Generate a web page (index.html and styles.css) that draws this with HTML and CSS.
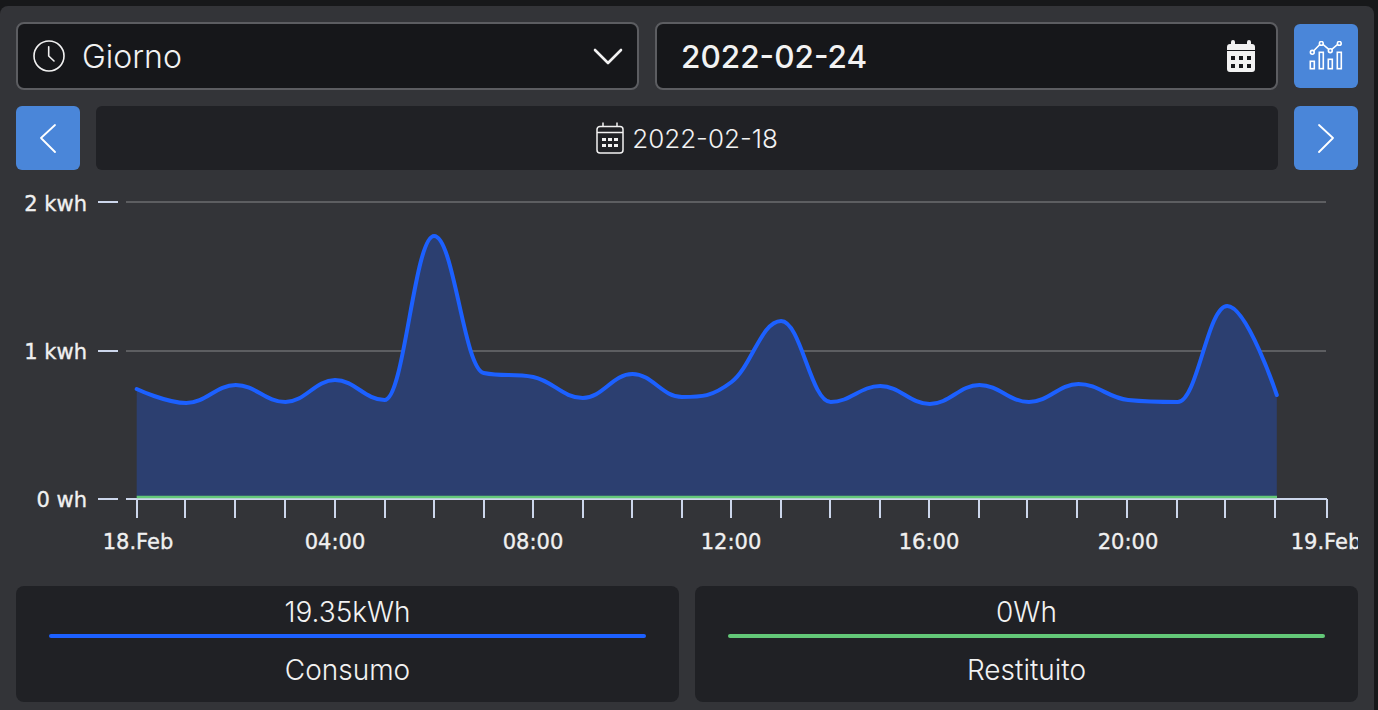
FILE: index.html
```html
<!DOCTYPE html>
<html lang="it">
<head>
    <meta charset="UTF-8">
    <meta name="viewport" content="width=device-width, initial-scale=1.0">
    <title>Consumi</title>
    <link rel="stylesheet" href="styles.css">
</head>
<body>
    <div class="panel">
        <!-- Periodo e data -->
        <div class="toolbar">
            <div class="field">
                <svg class="field-icon" width="32" height="32" viewBox="0 0 32 32" fill="none" stroke="currentColor" stroke-width="1.6" stroke-linecap="round" stroke-linejoin="round">
                    <circle cx="16" cy="16" r="15"/>
                    <path d="M15.7 6.7V16L21 21"/>
                </svg>
                <span class="field-text">Giorno</span>
                <svg class="field-end" width="30" height="17" viewBox="0 0 30 17" fill="none" stroke="currentColor" stroke-width="2.6" stroke-linecap="round" stroke-linejoin="round">
                    <path d="M2 2L15 15L28 2"/>
                </svg>
            </div>
            <div class="field field-date">
                <span class="field-text field-value">2022-02-24</span>
                <svg class="field-end" width="28" height="32" viewBox="0 0 28 32">
                    <path fill="currentColor" d="M6 0a2 2 0 0 1 2 2v2h12V2a2 2 0 0 1 4 0v2h1a3 3 0 0 1 3 3v3H0V7a3 3 0 0 1 3-3h1V2a2 2 0 0 1 2-2zM0 11h28v18a3 3 0 0 1-3 3H3a3 3 0 0 1-3-3z"/>
                    <path fill="#16171a" d="M4 16h4v4H4zM12 16h4v4h-4zM20 16h4v4h-4zM4 24h4v4H4zM12 24h4v4h-4zM20 24h4v4h-4z"/>
                </svg>
            </div>
            <button class="btn">
                <svg width="34" height="30" viewBox="0 0 34 30" fill="none" stroke="currentColor" stroke-width="1.6">
                    <path d="M3.3 11.3L12.3 2L21.3 9.7L30.3 2"/>
                    <g fill="#4a86d9">
                        <circle cx="3.3" cy="11.3" r="1.9"/>
                        <circle cx="12.3" cy="2.4" r="1.9"/>
                        <circle cx="21.3" cy="9.7" r="1.9"/>
                        <circle cx="30.3" cy="2.4" r="1.9"/>
                    </g>
                    <rect x="1.3" y="20.3" width="4" height="7.4"/>
                    <rect x="10.3" y="11.3" width="4" height="16.4"/>
                    <rect x="19.3" y="18.3" width="4" height="9.4"/>
                    <rect x="28.3" y="11.3" width="4" height="16.4"/>
                </svg>
            </button>
        </div>

        <!-- Navigazione giorno -->
        <div class="nav">
            <button class="btn">
                <svg width="18" height="30" viewBox="0 0 18 30" fill="none" stroke="currentColor" stroke-width="1.8" stroke-linecap="round" stroke-linejoin="round">
                    <path d="M16 2L2 15L16 29"/>
                </svg>
            </button>
            <div class="nav-date">
                <svg width="28" height="32" viewBox="0 0 28 32" fill="none" stroke="currentColor" stroke-width="1.5">
                    <rect x="1" y="4.5" width="26" height="26.5" rx="3"/>
                    <path d="M1 10.5H27M7 0.5V4.5M21 0.5V4.5"/>
                    <path fill="currentColor" stroke="none" d="M6 16h4v3H6zM12 16h4v3h-4zM18 16h4v3h-4zM6 22h4v3H6zM12 22h4v3h-4zM18 22h4v3h-4z"/>
                </svg>
                <span>2022-02-18</span>
            </div>
            <button class="btn">
                <svg width="18" height="30" viewBox="0 0 18 30" fill="none" stroke="currentColor" stroke-width="1.8" stroke-linecap="round" stroke-linejoin="round">
                    <path d="M2 2L16 15L2 29"/>
                </svg>
            </button>
        </div>

        <!-- Grafico -->
        <svg class="chart" viewBox="16 170 1342 416">
            <path class="grid" d="M126 202H1326M126 351H1326"/>
            <path class="area" d="M136.7 497V389C136.7 389 166.5 403 186.3 403C206.1 403 216 385 235.8 385C255.6 385 265.6 402 285.4 402C305.2 402 315.2 380 335 380C354.8 380 364.8 400 384.6 400C404.4 400 414.3 236 434.1 236C453.9 236 463.9 369 483.7 373C503.5 377 513.5 373 533.3 377C553.1 381 563 398 582.8 398C602.6 398 612.6 374 632.4 374C652.2 374 662.2 397 682 397C701.8 397 711.7 397 731.5 382C751.3 367 761.3 321 781.1 321C800.9 321 810.9 402 830.7 402C850.5 402 860.5 386 880.3 386C900.1 386 910 404 929.8 404C949.6 404 959.6 385 979.4 385C999.2 385 1009.2 402 1029 402C1048.8 402 1058.7 384 1078.5 384C1098.3 384 1108.3 398 1128.1 400C1147.9 402 1157.9 402 1177.7 402C1197.5 402 1207.4 306 1227.2 306C1247 306 1276.8 395 1276.8 395V497Z"/>
            <path class="axis" d="M98 202H118M98 351H118M98 499H118M126 499H1327"/>
            <path class="axis" d="M137 499V518M185 499V518M235 499V518M285 499V518M335 499V518M385 499V518M434 499V518M484 499V518M533 499V518M583 499V518M632 499V518M682 499V518M731 499V518M781 499V518M830 499V518M880 499V518M929 499V518M979 499V518M1027 499V518M1077 499V518M1127 499V518M1177 499V518M1225 499V518M1275 499V518M1327 499V518"/>
            <path class="line-out" d="M136.7 497H1277"/>
            <path class="line-in" d="M136.7 389C136.7 389 166.5 403 186.3 403C206.1 403 216 385 235.8 385C255.6 385 265.6 402 285.4 402C305.2 402 315.2 380 335 380C354.8 380 364.8 400 384.6 400C404.4 400 414.3 236 434.1 236C453.9 236 463.9 369 483.7 373C503.5 377 513.5 373 533.3 377C553.1 381 563 398 582.8 398C602.6 398 612.6 374 632.4 374C652.2 374 662.2 397 682 397C701.8 397 711.7 397 731.5 382C751.3 367 761.3 321 781.1 321C800.9 321 810.9 402 830.7 402C850.5 402 860.5 386 880.3 386C900.1 386 910 404 929.8 404C949.6 404 959.6 385 979.4 385C999.2 385 1009.2 402 1029 402C1048.8 402 1058.7 384 1078.5 384C1098.3 384 1108.3 398 1128.1 400C1147.9 402 1157.9 402 1177.7 402C1197.5 402 1207.4 306 1227.2 306C1247 306 1276.8 395 1276.8 395"/>
            <g class="y-labels">
                <text x="87" y="211">2 kwh</text>
                <text x="87" y="359">1 kwh</text>
                <text x="87" y="507">0 wh</text>
            </g>
            <g class="x-labels">
                <text x="138" y="549">18.Feb</text>
                <text x="335" y="549">04:00</text>
                <text x="533" y="549">08:00</text>
                <text x="731" y="549">12:00</text>
                <text x="929" y="549">16:00</text>
                <text x="1128" y="549">20:00</text>
                <text x="1326" y="549">19.Feb</text>
            </g>
        </svg>

        <!-- Totali -->
        <div class="totals">
            <div class="total">
                <div class="total-value">19.35kWh</div>
                <div class="total-bar total-bar-in"></div>
                <div class="total-label">Consumo</div>
            </div>
            <div class="total">
                <div class="total-value">0Wh</div>
                <div class="total-bar total-bar-out"></div>
                <div class="total-label">Restituito</div>
            </div>
        </div>
    </div>
</body>
</html>
```

FILE: styles.css
```css
html, body {
    height: 100%;
    overflow: hidden;
}
body {
    margin: 0;
    background-color: #17181a;
    font-family: Inter, "Liberation Sans", sans-serif;
    color: #f2f2f2;
}
.panel {
    width: 1374px;
    height: 704px;
    margin-top: 6px;
    padding: 16px 16px 0;
    box-sizing: border-box;
    background-color: #333438;
    border-radius: 8px 8px 0 0;
}
.toolbar {
    display: flex;
    align-items: center;
    gap: 16px;
}
.field {
    width: 623px;
    height: 68px;
    box-sizing: border-box;
    display: flex;
    align-items: center;
    padding: 0 14px 0 15px;
    background-color: #16171a;
    border: 2px solid #5c5d61;
    border-radius: 8px;
}
.field-date {
    padding: 0 21px 0 24px;
}
.field-icon {
    margin-right: 17px;
}
.field-text {
    flex: 1;
    font-size: 32px;
    font-weight: 300;
}
.field-value {
    font-size: 31.5px;
    font-weight: 500;
}
.btn {
    width: 64px;
    height: 64px;
    flex: none;
    display: flex;
    align-items: center;
    justify-content: center;
    padding: 0;
    background-color: #4a86d9;
    color: white;
    border: none;
    border-radius: 6px;
}
.nav {
    display: flex;
    gap: 16px;
    margin-top: 16px;
}
.nav-date {
    flex: 1;
    display: flex;
    align-items: center;
    justify-content: center;
    gap: 8px;
    background-color: #202125;
    border-radius: 6px;
    font-size: 26px;
    font-weight: 300;
}
.chart {
    display: block;
    width: 1342px;
    height: 416px;
}
.grid {
    fill: none;
    stroke: #5d5e61;
    stroke-width: 2;
}
.area {
    fill: #2c3f70;
}
.axis {
    fill: none;
    stroke: #ccd6eb;
    stroke-width: 2;
}
.line-in {
    fill: none;
    stroke: #1c60ff;
    stroke-width: 4;
    stroke-linecap: round;
    stroke-linejoin: round;
}
.line-out {
    fill: none;
    stroke: #63c878;
    stroke-width: 2.5;
}
.y-labels text,
.x-labels text {
    font-family: "DejaVu Sans", sans-serif;
    font-size: 21px;
    fill: #f0f0f0;
    stroke: #f0f0f0;
    stroke-width: 0.35;
}
.y-labels text {
    text-anchor: end;
}
.x-labels text {
    text-anchor: middle;
}
.totals {
    display: flex;
    gap: 16px;
}
.total {
    flex: 1;
    height: 116px;
    padding: 0 33px;
    background-color: #202125;
    border-radius: 8px;
    text-align: center;
    font-size: 28px;
    font-weight: 300;
}
.total-value {
    height: 48px;
    line-height: 52px;
}
.total-bar {
    height: 4px;
    border-radius: 2px;
}
.total-bar-in {
    background-color: #1c60ff;
}
.total-bar-out {
    background-color: #63c878;
}
.total-label {
    line-height: 64px;
}
```
